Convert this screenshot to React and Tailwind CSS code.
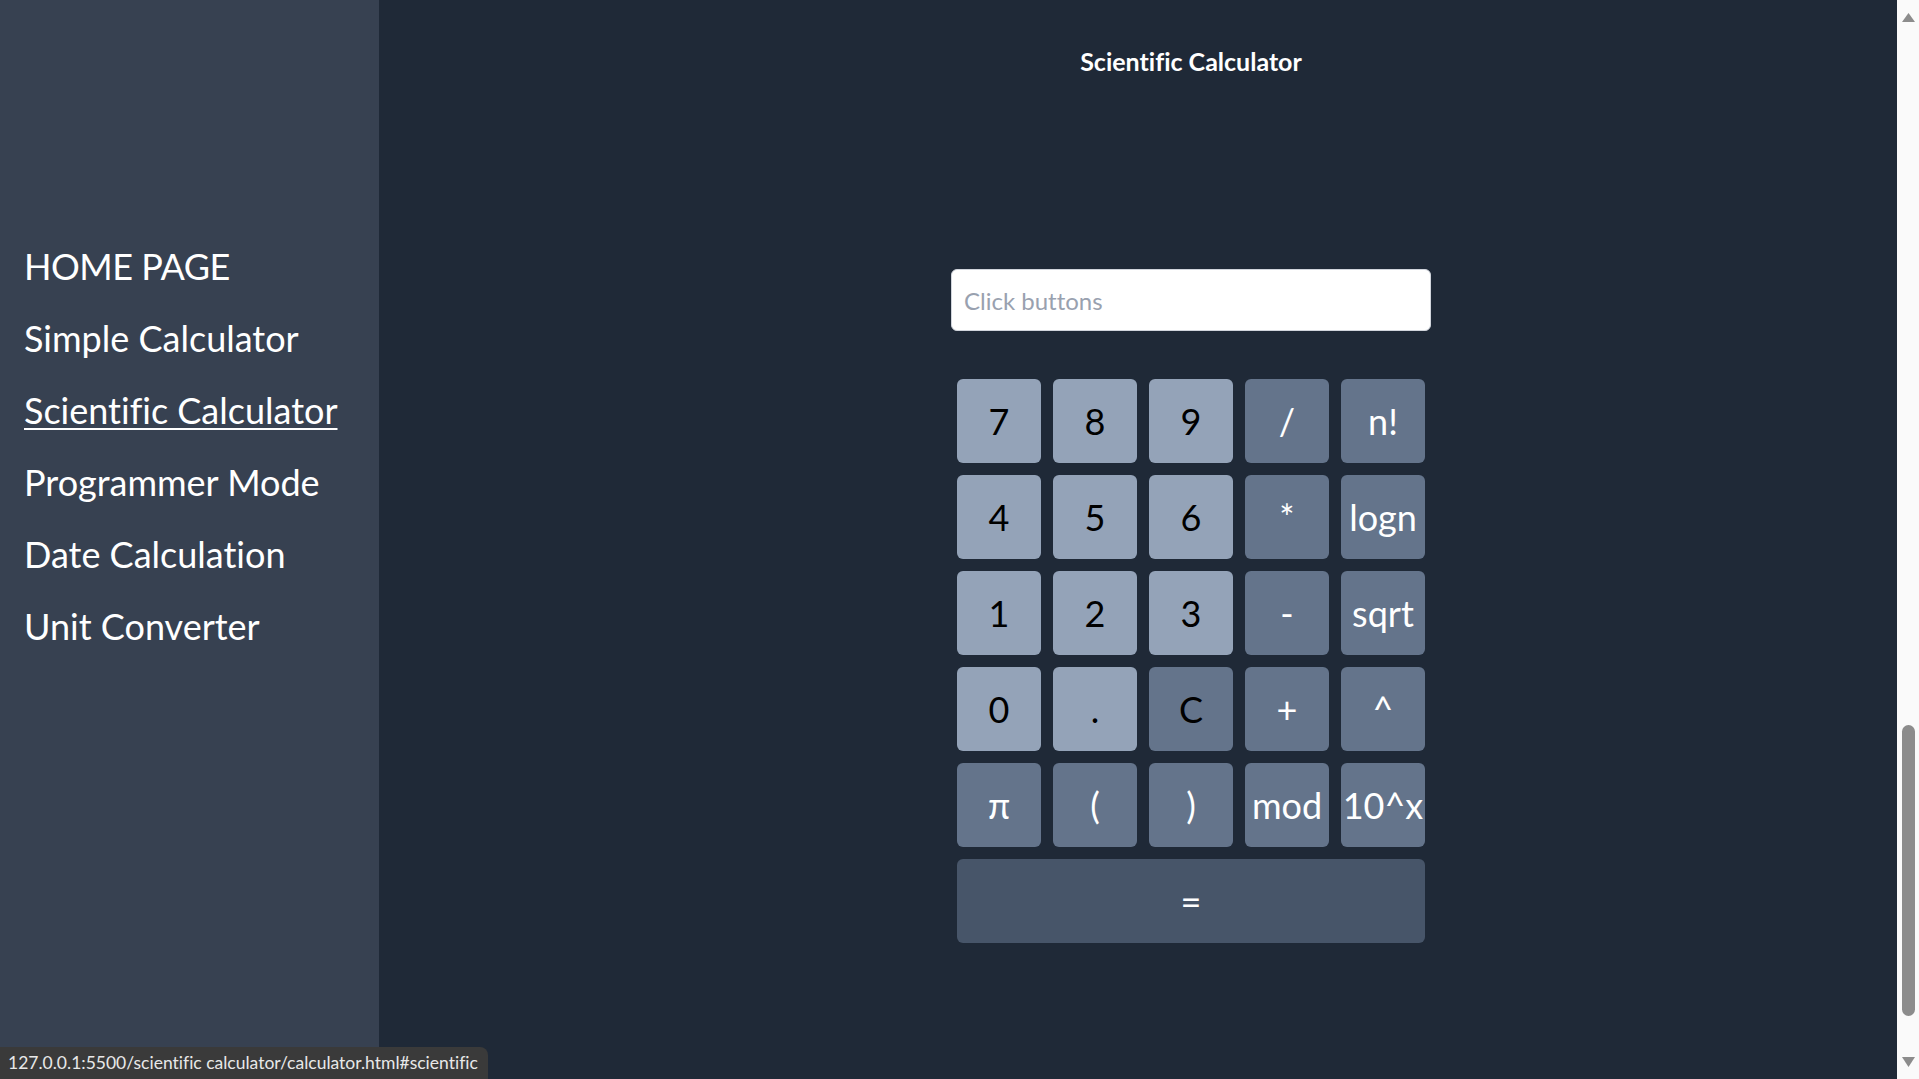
import React from "react";

const navItems = [
  "HOME PAGE",
  "Simple Calculator",
  "Scientific Calculator",
  "Programmer Mode",
  "Date Calculation",
  "Unit Converter",
];

const buttons = [
  ["7", "l"], ["8", "l"], ["9", "l"], ["/", "d"], ["n!", "d"],
  ["4", "l"], ["5", "l"], ["6", "l"], ["*", "d"], ["logn", "d"],
  ["1", "l"], ["2", "l"], ["3", "l"], ["-", "d"], ["sqrt", "d"],
  ["0", "l"], [".", "l"], ["C", "c"], ["+", "d"], ["^", "d"],
  ["π", "d"], ["(", "d"], [")", "d"], ["mod", "d"], ["10^x", "d"],
];

export default function App() {
  return (
    <div className="relative flex h-[1079px] w-[1919px] overflow-hidden font-['Lato',sans-serif] [font-variant-ligatures:none]">
      <aside className="w-[379px] shrink-0 bg-[#374151] pl-[24px] pt-[230px]">
        <nav className="flex flex-col">
          {navItems.map((item) => (
            <a
              key={item}
              href="#"
              className={
                "block py-4 text-4xl leading-[40px] text-white " +
                (item === "Scientific Calculator"
                  ? "underline decoration-2 underline-offset-4"
                  : item === "HOME PAGE"
                  ? "no-underline tracking-[-0.5px]"
                  : "no-underline")
              }
            >
              {item}
            </a>
          ))}
        </nav>
      </aside>

      <main className="relative flex flex-1 flex-col items-center bg-[#1f2937] pl-[106px] pt-[47px]">
        <h1 className="text-[25px] font-bold leading-[28px] text-white">Scientific Calculator</h1>
        <input
          type="text"
          placeholder="Click buttons"
          readOnly
          className="mt-[194px] h-[62px] w-[480px] rounded-md border border-gray-300 bg-white px-3 text-2xl text-gray-900 placeholder:text-gray-400 outline-none"
        />
        <div className="mt-[48px] grid w-[468px] grid-cols-5 gap-3">
          {buttons.map(([label, kind]) => (
            <button
              key={label}
              className={
                "flex h-[84px] items-center justify-center rounded-md text-4xl " +
                (kind === "l"
                  ? "bg-[#94a3b8] text-black"
                  : kind === "c"
                  ? "bg-[#64748b] text-black"
                  : "bg-[#64748b] text-white")
              }
            >
              {label}
            </button>
          ))}
          <button className="col-span-5 flex h-[84px] items-center justify-center rounded-md bg-[#475569] text-4xl text-white">
            =
          </button>
        </div>
      </main>

      <div className="flex w-[22px] shrink-0 flex-col items-center bg-[#fafafa] pt-[13px]">
        <svg width="13" height="9" viewBox="0 0 13 9" className="block">
          <path d="M6.5 0 L13 9 L0 9 Z" fill="#8c8c8c" />
        </svg>
        <div className="mt-[703px] h-[291px] w-[13px] rounded-full bg-[#8c8c8c]" />
        <svg width="13" height="10" viewBox="0 0 13 10" className="mt-[41px] block">
          <path d="M0 0 L13 0 L6.5 10 Z" fill="#8c8c8c" />
        </svg>
      </div>

      <div className="absolute bottom-0 left-0 flex h-[32px] items-center rounded-tr-lg bg-[#3a3a3a] pl-[8px] pr-[10px] text-[17.5px] text-[#e8e8e8]">
        127.0.0.1:5500/scientific calculator/calculator.html#scientific
      </div>
    </div>
  );
}
